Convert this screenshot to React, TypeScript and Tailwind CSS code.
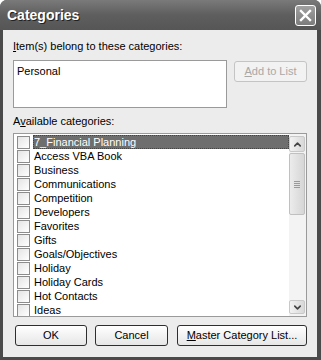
import { ChevronUp, ChevronDown } from "lucide-react";

const categories = [
  "7_Financial Planning",
  "Access VBA Book",
  "Business",
  "Communications",
  "Competition",
  "Developers",
  "Favorites",
  "Gifts",
  "Goals/Objectives",
  "Holiday",
  "Holiday Cards",
  "Hot Contacts",
  "Ideas",
];

const font = { fontFamily: '"Liberation Sans", Arial, sans-serif' };

function Btn({ children, w, disabled }: { children: React.ReactNode; w: string; disabled?: boolean }) {
  return (
    <div
      className={`${w} h-[21px] flex items-center justify-center rounded-[3px] border text-[11px] ${
        disabled
          ? "border-[#c4c4c4] bg-[#f2f2f2] text-[#a8a8a8]"
          : "border-[#2e2e2e] bg-gradient-to-b from-white to-[#e6e6e6] text-black"
      }`}
    >
      {children}
    </div>
  );
}

export default function App() {
  return (
    <div className="w-[321px] h-[360px] bg-[#4a4a4a] rounded-t-[7px] flex flex-col overflow-hidden" style={font}>
      {/* title bar */}
      <div className="h-[30px] flex items-center justify-between pl-[7px] pr-[5px] bg-gradient-to-b from-[#7a7a7a] via-[#5e5e5e] to-[#565656]">
        <span className="text-white font-bold text-[14px]" style={{ textShadow: "1px 1px 0 #222" }}>
          Categories
        </span>
        <div className="w-[21px] h-[21px] rounded-[3px] border border-white bg-gradient-to-b from-[#a0a0a0] to-[#7c7c7c] flex items-center justify-center">
          <svg width="13" height="13" viewBox="0 0 13 13">
            <path d="M2 2 L11 11 M11 2 L2 11" stroke="white" strokeWidth="2.4" strokeLinecap="square" />
          </svg>
        </div>
      </div>

      {/* body */}
      <div className="flex-1 mx-[3px] mb-[3px] mr-[4px] bg-[#ececec] pt-[10px] pl-[10px] pr-[10px] flex flex-col text-[11px] text-black">
        <div className="leading-[13px]">
          <span className="underline">I</span>tem(s) belong to these categories:
        </div>
        <div className="mt-[7px] flex items-start">
          <div className="w-[214px] h-[48px] bg-white border border-[#9a9a9a] px-[3px] pt-[4px] leading-[13px]">
            Personal
          </div>
          <div className="ml-[7px] mt-[1px]">
            <Btn w="w-[73px]" disabled>
              <span>
                <span className="underline">A</span>dd to List
              </span>
            </Btn>
          </div>
        </div>
        <div className="mt-[7px] leading-[13px]">
          A<span className="underline">v</span>ailable categories:
        </div>
        <div className="mt-[5px] w-[294px] h-[184px] bg-white border border-[#9a9a9a] flex overflow-hidden">
          <div className="flex-1 pt-[1px] pl-[3px]">
            {categories.map((c, i) => (
              <div key={c} className="h-[14px] flex items-center">
                <div className="w-[13px] h-[13px] border border-[#8c8c8c] bg-gradient-to-br from-[#e4e4e4] to-white shrink-0" />
                <div
                  className={`ml-[3px] flex-1 h-[14px] flex items-center pl-[1px] leading-[13px] ${
                    i === 0 ? "bg-[#6e6e6e] text-white outline outline-1 outline-dotted outline-[#444] -outline-offset-1" : ""
                  }`}
                >
                  {c}
                </div>
              </div>
            ))}
          </div>
          <div className="w-[17px] bg-[#f3f3f3] flex flex-col pt-[2px] pb-[2px] pr-[1px]">
            <div className="h-[16px] rounded-[2px] border border-[#c8c8c8] bg-gradient-to-r from-[#f2f2f2] to-[#d8d8d8] flex items-center justify-center">
              <ChevronUp size={11} strokeWidth={3.5} color="#444" />
            </div>
            <div className="mt-[1px] h-[62px] rounded-[2px] border border-[#c0c0c0] bg-gradient-to-r from-[#ececec] to-[#d6d6d6] flex flex-col items-center justify-center gap-[1px]">
              <div className="w-[6px] h-px bg-[#9a9a9a]" />
              <div className="w-[6px] h-px bg-[#9a9a9a]" />
              <div className="w-[6px] h-px bg-[#9a9a9a]" />
              <div className="w-[6px] h-px bg-[#9a9a9a]" />
            </div>
            <div className="flex-1" />
            <div className="h-[14px] rounded-[2px] border border-[#c8c8c8] bg-gradient-to-r from-[#f2f2f2] to-[#d8d8d8] flex items-center justify-center">
              <ChevronDown size={11} strokeWidth={3.5} color="#444" />
            </div>
          </div>
        </div>
        <div className="mt-[8px] flex items-center pl-[2px]">
          <Btn w="w-[73px]">OK</Btn>
          <div className="ml-[8px]">
            <Btn w="w-[73px]">Cancel</Btn>
          </div>
          <div className="ml-[9px]">
            <Btn w="w-[130px]">
              <span>
                <span className="underline">M</span>aster Category List...
              </span>
            </Btn>
          </div>
        </div>
      </div>
    </div>
  );
}
